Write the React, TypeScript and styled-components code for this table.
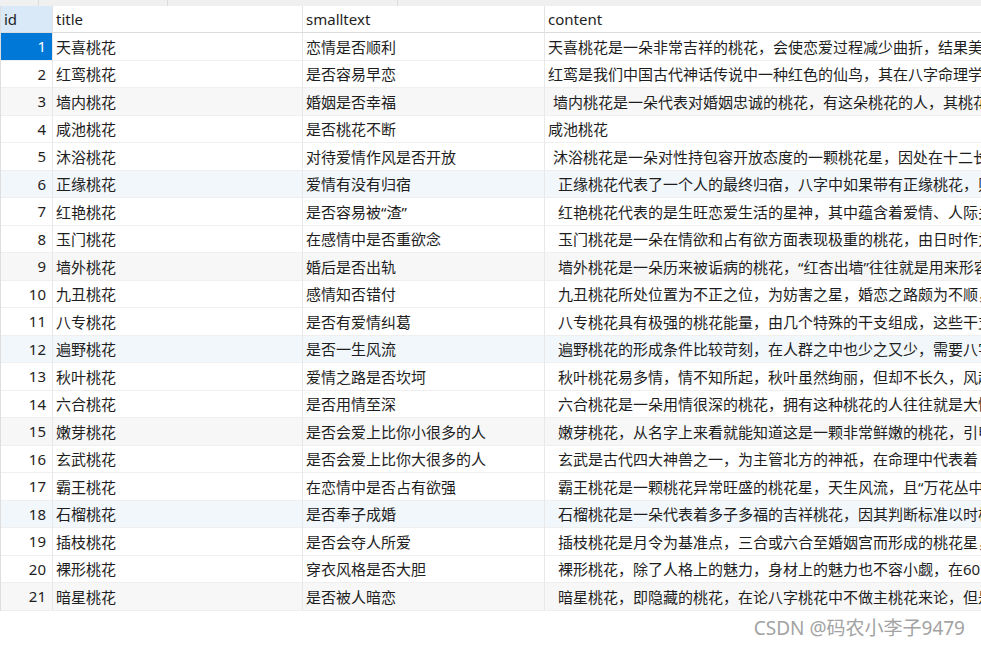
import React from "react";
import styled, { createGlobalStyle } from "styled-components";

const Global = createGlobalStyle`
  html, body { margin: 0; padding: 0; background: #ffffff; }
  body {
    font-family: "Noto Sans", "Noto Sans CJK SC", sans-serif;
    width: 981px; height: 647px; overflow: hidden;
  }
`;

const Page = styled.div`
  position: relative;
  width: 981px;
  height: 647px;
  overflow: hidden;
  background: #fff;
`;

const TabStrip = styled.div`
  display: flex;
  height: 6px;
  background: #f0f0f0;
`;

const TabSeg = styled.div<{ $w: number }>`
  width: ${(p) => p.$w}px;
  flex: 0 0 auto;
  border-right: 1px solid #dcdcdc;
  box-sizing: border-box;
`;

const Grid = styled.div`
  display: grid;
  grid-template-columns: 52px 250px 242px 437px;
  border-left: 1px solid #dedede;
  width: 981px;
  box-sizing: border-box;
`;

const HeadCell = styled.div<{ $active?: boolean }>`
  height: 27px;
  box-sizing: border-box;
  display: flex;
  align-items: center;
  padding-left: 3px;
  font-size: 15px;
  color: #1e1e1e;
  background: ${(p) => (p.$active ? "#d9e9f8" : "#ffffff")};
  border-right: 1px solid #e3e3e3;
  border-bottom: 1px solid #dcdcdc;
  white-space: nowrap;
  overflow: hidden;
`;

type Tone = "white" | "gray" | "blue";

const toneBg: Record<Tone, string> = {
  white: "#ffffff",
  gray: "#f7f7f7",
  blue: "#f2f7fc",
};

const Cell = styled.div<{ $tone: Tone; $indent?: number }>`
  height: 27.5px;
  box-sizing: border-box;
  display: flex;
  align-items: center;
  padding-left: ${(p) => 3 + (p.$indent || 0)}px;
  font-size: 15px;
  color: #1e1e1e;
  background: ${(p) => toneBg[p.$tone]};
  border-right: 1px solid #e8e8e8;
  border-bottom: 1px solid #efefef;
  white-space: nowrap;
  overflow: hidden;
`;

const IdCell = styled(Cell)<{ $selected?: boolean }>`
  justify-content: flex-end;
  padding-left: 0;
  padding-right: 6px;
  background: ${(p) => (p.$selected ? "#0078d7" : toneBg[p.$tone])};
  color: ${(p) => (p.$selected ? "#ffffff" : "#1e1e1e")};
`;

const Watermark = styled.div`
  position: absolute;
  right: 16px;
  top: 615px;
  font-size: 19px;
  line-height: 26px;
  color: #a3a3a3;
  text-shadow: 0 0 1px #ffffff, 0 0 2px #ffffff;
  white-space: nowrap;
`;

type Row = { id: number; title: string; small: string; content: string; indent?: number };

const rows: Row[] = [
  { id: 1, title: "天喜桃花", small: "恋情是否顺利", content: "天喜桃花是一朵非常吉祥的桃花，会使恋爱过程减少曲折，结果美满幸福" },
  { id: 2, title: "红鸾桃花", small: "是否容易早恋", content: "红鸾是我们中国古代神话传说中一种红色的仙鸟，其在八字命理学中" },
  { id: 3, title: "墙内桃花", small: "婚姻是否幸福", content: "墙内桃花是一朵代表对婚姻忠诚的桃花，有这朵桃花的人，其桃花", indent: 5 },
  { id: 4, title: "咸池桃花", small: "是否桃花不断", content: "咸池桃花" },
  { id: 5, title: "沐浴桃花", small: "对待爱情作风是否开放", content: "沐浴桃花是一朵对性持包容开放态度的一颗桃花星，因处在十二长生", indent: 5 },
  { id: 6, title: "正缘桃花", small: "爱情有没有归宿", content: "正缘桃花代表了一个人的最终归宿，八字中如果带有正缘桃花，则", indent: 10 },
  { id: 7, title: "红艳桃花", small: "是否容易被“渣”", content: "红艳桃花代表的是生旺恋爱生活的星神，其中蕴含着爱情、人际关系", indent: 10 },
  { id: 8, title: "玉门桃花", small: "在感情中是否重欲念", content: "玉门桃花是一朵在情欲和占有欲方面表现极重的桃花，由日时作为", indent: 10 },
  { id: 9, title: "墙外桃花", small: "婚后是否出轨", content: "墙外桃花是一朵历来被诟病的桃花，“红杏出墙”往往就是用来形容", indent: 10 },
  { id: 10, title: "九丑桃花", small: "感情知否错付", content: "九丑桃花所处位置为不正之位，为妨害之星，婚恋之路颇为不顺，", indent: 10 },
  { id: 11, title: "八专桃花", small: "是否有爱情纠葛", content: "八专桃花具有极强的桃花能量，由几个特殊的干支组成，这些干支", indent: 10 },
  { id: 12, title: "遍野桃花", small: "是否一生风流", content: "遍野桃花的形成条件比较苛刻，在人群之中也少之又少，需要八字", indent: 10 },
  { id: 13, title: "秋叶桃花", small: "爱情之路是否坎坷", content: "秋叶桃花易多情，情不知所起，秋叶虽然绚丽，但却不长久，风起", indent: 10 },
  { id: 14, title: "六合桃花", small: "是否用情至深", content: "六合桃花是一朵用情很深的桃花，拥有这种桃花的人往往就是大情", indent: 10 },
  { id: 15, title: "嫩芽桃花", small: "是否会爱上比你小很多的人", content: "嫩芽桃花，从名字上来看就能知道这是一颗非常鲜嫩的桃花，引申", indent: 10 },
  { id: 16, title: "玄武桃花", small: "是否会爱上比你大很多的人", content: "玄武是古代四大神兽之一，为主管北方的神祇，在命理中代表着", indent: 10 },
  { id: 17, title: "霸王桃花", small: "在恋情中是否占有欲强", content: "霸王桃花是一颗桃花异常旺盛的桃花星，天生风流，且“万花丛中", indent: 10 },
  { id: 18, title: "石榴桃花", small: "是否奉子成婚", content: "石榴桃花是一朵代表着多子多福的吉祥桃花，因其判断标准以时柱", indent: 10 },
  { id: 19, title: "插枝桃花", small: "是否会夺人所爱", content: "插枝桃花是月令为基准点，三合或六合至婚姻宫而形成的桃花星，", indent: 10 },
  { id: 20, title: "裸形桃花", small: "穿衣风格是否大胆", content: "裸形桃花，除了人格上的魅力，身材上的魅力也不容小觑，在60", indent: 10 },
  { id: 21, title: "暗星桃花", small: "是否被人暗恋", content: "暗星桃花，即隐藏的桃花，在论八字桃花中不做主桃花来论，但是", indent: 10 },
];

const toneFor = (id: number): Tone => (id % 6 === 3 ? "gray" : id % 6 === 0 ? "blue" : "white");

export default function App() {
  return (
    <Page>
      <Global />
      <TabStrip>
        <TabSeg $w={39} />
        <TabSeg $w={129} />
        <TabSeg $w={230} />
      </TabStrip>
      <Grid>
        <HeadCell $active>id</HeadCell>
        <HeadCell>title</HeadCell>
        <HeadCell>smalltext</HeadCell>
        <HeadCell>content</HeadCell>
        {rows.map((r) => {
          const tone = toneFor(r.id);
          return (
            <React.Fragment key={r.id}>
              <IdCell $tone={tone} $selected={r.id === 1}>{r.id}</IdCell>
              <Cell $tone={tone}>{r.title}</Cell>
              <Cell $tone={tone}>{r.small}</Cell>
              <Cell $tone={tone} $indent={r.indent}>{r.content}</Cell>
            </React.Fragment>
          );
        })}
      </Grid>
      <Watermark>CSDN @码农小李子9479</Watermark>
    </Page>
  );
}
